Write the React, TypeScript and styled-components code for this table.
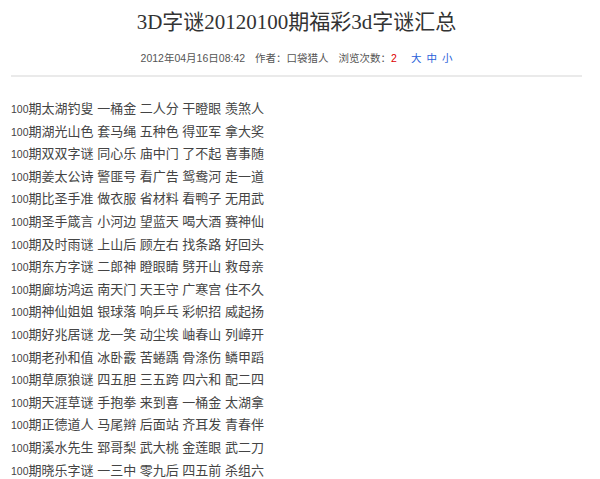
import React from "react";
import styled, { createGlobalStyle } from "styled-components";

const Global = createGlobalStyle`
  html, body { margin: 0; padding: 0; background: #fff; }
  body { font-family: "Liberation Sans", "Noto Sans CJK SC", sans-serif; }
`;

const Page = styled.div`
  width: 571px;
  margin: 0 0 0 11px;
  padding-top: 8px;
`;

const Title = styled.h1`
  margin: 0;
  text-align: center;
  font-family: "Liberation Serif", "Noto Sans CJK SC", serif;
  font-weight: normal;
  font-size: 21px;
  line-height: 28px;
  color: #333;
`;

const Meta = styled.div`
  display: flex;
  justify-content: center;
  gap: 10px;
  margin-top: 15px;
  font-size: 10.5px;
  line-height: 14px;
  color: #555;
`;

const Count = styled.span`
  color: #d00;
`;

const SizeLinks = styled.span`
  display: inline-flex;
  gap: 5px;
  margin-left: 14px;
`;

const SizeLink = styled.a`
  color: #2a5fd9;
  text-decoration: none;
  cursor: pointer;
`;

const Divider = styled.hr`
  border: none;
  height: 2px;
  background: #eaeaea;
  margin: 10px 0 0 0;
`;

const Body = styled.div`
  padding-top: 21px;
  font-size: 13px;
  line-height: 22.6px;
  color: #444;
`;

const Line = styled.div`
  white-space: pre;
`;

const Num = styled.span`
  font-size: 10.5px;
`;

const lines = [
  "期太湖钓叟 一桶金 二人分 干瞪眼 羡煞人",
  "期湖光山色 套马绳 五种色 得亚军 拿大奖",
  "期双双字谜 同心乐 庙中门 了不起 喜事随",
  "期姜太公诗 警匪号 看广告 鸳鸯河 走一道",
  "期比圣手准 做衣服 省材料 看鸭子 无用武",
  "期圣手箴言 小河边 望蓝天 喝大酒 赛神仙",
  "期及时雨谜 上山后 顾左右 找条路 好回头",
  "期东方字谜 二郎神 瞪眼睛 劈开山 救母亲",
  "期廊坊鸿运 南天门 天王守 广寒宫 住不久",
  "期神仙姐姐 银球落 响乒乓 彩帜招 威起扬",
  "期好兆居谜 龙一笑 动尘埃 岫春山 列嶂开",
  "期老孙和值 冰卧霰 苦蜷踽 骨涤伤 鳞甲蹈",
  "期草原狼谜 四五胆 三五跨 四六和 配二四",
  "期天涯草谜 手抱拳 来到喜 一桶金 太湖拿",
  "期正德道人 马尾辫 后面站 齐耳发 青春伴",
  "期溪水先生 郅哥梨 武大桃 金莲眼 武二刀",
  "期晓乐字谜 一三中 零九后 四五前 杀组六",
];

export default function App() {
  return (
    <>
      <Global />
      <Page>
        <Title>3D字谜20120100期福彩3d字谜汇总</Title>
        <Meta>
          <span>2012年04月16日08:42</span>
          <span>作者：口袋猎人</span>
          <span>
            浏览次数：<Count>2</Count>
            <SizeLinks>
              <SizeLink>大</SizeLink>
              <SizeLink>中</SizeLink>
              <SizeLink>小</SizeLink>
            </SizeLinks>
          </span>
        </Meta>
        <Divider />
        <Body>
          {lines.map((l) => (
            <Line key={l}>
              <Num>100</Num>
              {l}
            </Line>
          ))}
        </Body>
      </Page>
    </>
  );
}
